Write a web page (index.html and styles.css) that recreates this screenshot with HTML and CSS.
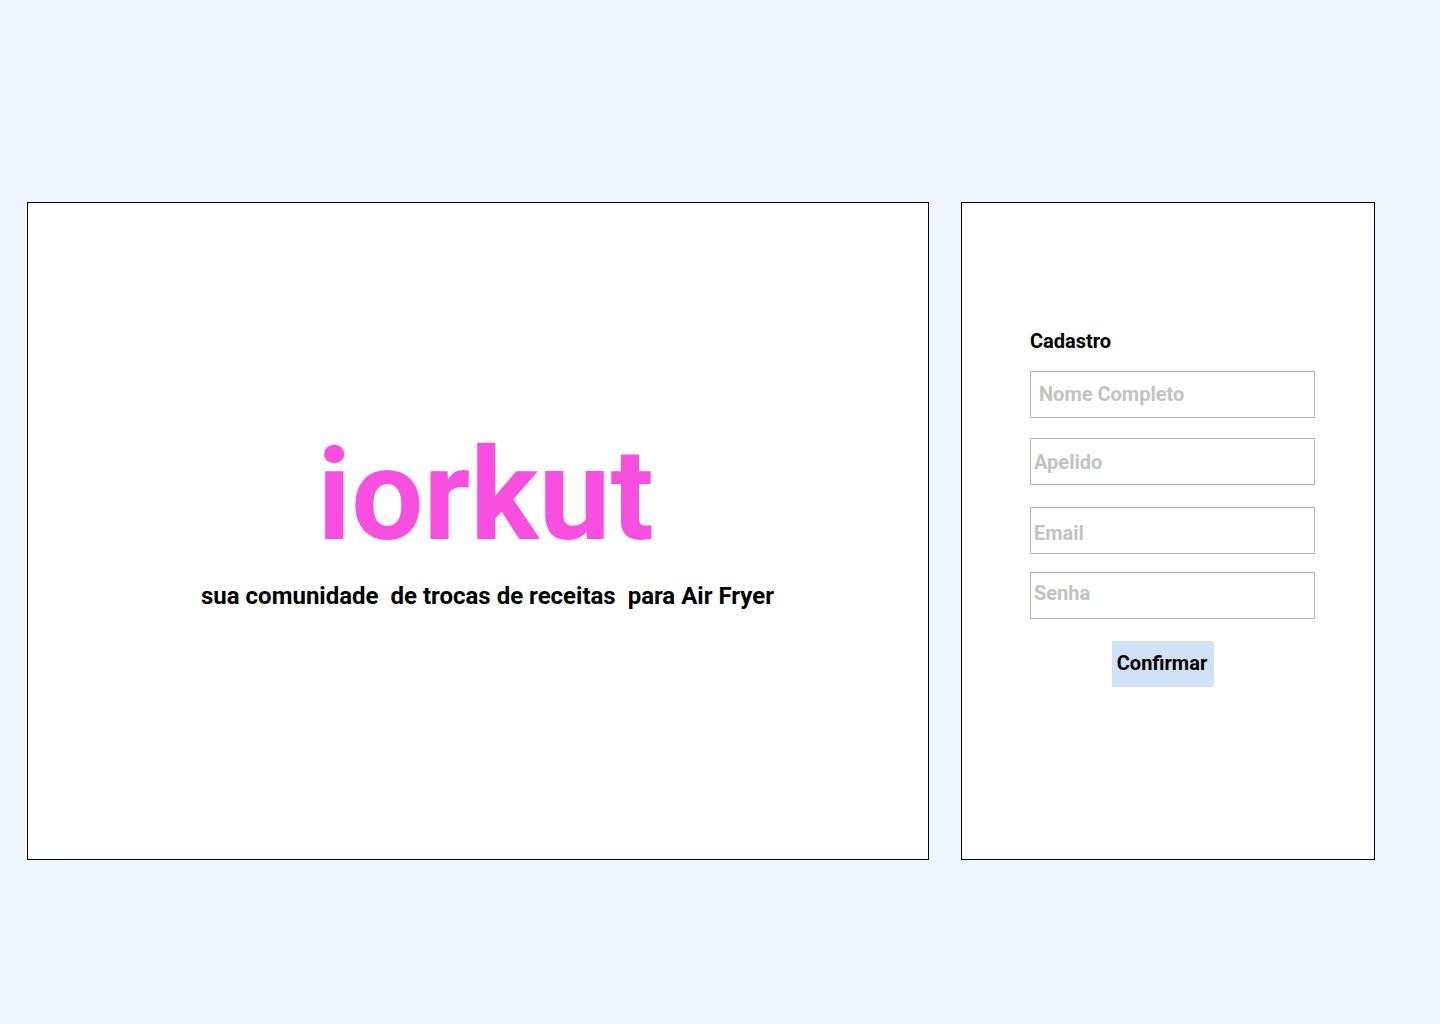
FILE: index.html
```html
<!DOCTYPE html>
<html lang="pt-BR">
<head>
<meta charset="utf-8">
<title>iorkut</title>
<link rel="stylesheet" href="styles.css">
</head>
<body>
<main class="page">
  <section class="hero">
    <h1 class="logo">iorkut</h1>
    <p class="tagline">sua comunidade  de trocas de receitas  para Air Fryer</p>
  </section>
  <section class="signup">
    <form class="form">
      <h2 class="form-title">Cadastro</h2>
      <input class="field field-name" type="text" placeholder="Nome Completo">
      <input class="field field-nick" type="text" placeholder="Apelido">
      <input class="field field-email" type="email" placeholder="Email">
      <input class="field field-pass" type="password" placeholder="Senha">
      <button class="confirm" type="button">Confirmar</button>
    </form>
  </section>
</main>
</body>
</html>
```
FILE: styles.css
```css
* { box-sizing: border-box; }
html, body { margin: 0; padding: 0; }
body {
  background: #eff6ff;
  font-family: Roboto, "Liberation Sans", Arial, sans-serif;
  width: 1440px;
  height: 1024px;
  overflow: hidden;
}
.page {
  display: flex;
  gap: 32px;
  padding: 202px 0 0 27px;
}
.hero {
  width: 902px;
  height: 658px;
  border: 1px solid #000;
  background: #fff;
  display: flex;
  flex-direction: column;
  align-items: center;
  justify-content: center;
  padding-left: 19px;
  padding-bottom: 22px;
}
.logo {
  margin: 0 4px 0 0;
  font-size: 128px;
  line-height: 1;
  font-weight: 700;
  color: #f94fe0;
}
.tagline {
  margin: 23px 0 0;
  font-size: 24px;
  font-weight: 700;
  color: #000;
  white-space: pre;
}
.signup {
  width: 414px;
  height: 658px;
  border: 1px solid #000;
  background: #fff;
}
.form {
  display: flex;
  flex-direction: column;
  align-items: flex-start;
  padding: 126px 0 0 68px;
}
.form-title {
  margin: 0 0 18px;
  font-size: 20px;
  line-height: 24px;
  font-weight: 700;
  color: #000;
}
.field {
  width: 285px;
  height: 47px;
  margin: 0;
  border: 1px solid #b5b5b5;
  background: #fff;
  font-family: inherit;
  font-size: 20px;
  font-weight: 700;
  color: #000;
  padding: 0 3px;
  outline: none;
}
.field::placeholder { color: #c2c2c2; opacity: 1; }
.field-name { padding-left: 8px; padding-bottom: 2px; }
.field-nick { margin-top: 20px; }
.field-email { margin-top: 22px; padding-top: 5px; }
.field-pass { margin-top: 18px; padding-bottom: 6px; }
.confirm {
  margin: 22px 0 0 82px;
  width: 102px;
  height: 46px;
  border: none;
  background: #cfe2f3;
  font-family: inherit;
  font-size: 20px;
  font-weight: 700;
  color: #000;
  padding: 0 2px 2px 0;
}
```
